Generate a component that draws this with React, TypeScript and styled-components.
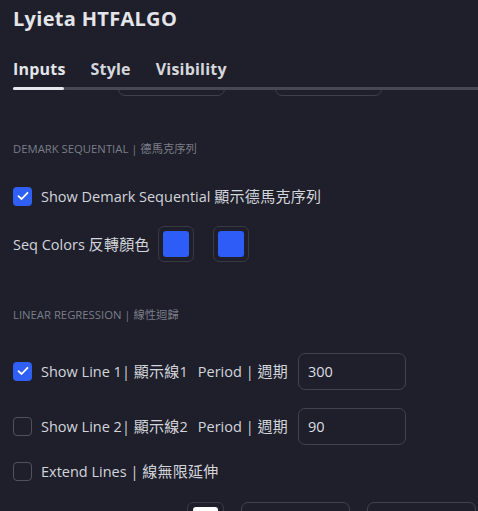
import React from "react";
import styled, { createGlobalStyle } from "styled-components";

const Global = createGlobalStyle`
  html, body { margin: 0; padding: 0; background: #1e1f2a; }
  body {
    font-family: "Open Sans", "Noto Sans CJK TC", sans-serif;
    color: #d1d4dc;
  }
`;

const Dialog = styled.div`
  width: 478px;
  height: 511px;
  overflow: hidden;
  background: #1e1f2a;
`;

const Title = styled.h1`
  margin: 0;
  padding: 6px 0 0 13px;
  font-size: 20px;
  font-weight: 700;
  line-height: 26px;
  color: #e4e5ea;
  letter-spacing: 0.3px;
`;

const Tabs = styled.div`
  display: flex;
  gap: 25px;
  padding-left: 13px;
  margin-top: 24px;
`;

const Tab = styled.div<{ $active?: boolean }>`
  font-size: 16px;
  font-weight: 700;
  line-height: 26px;
  letter-spacing: 0.2px;
  color: ${(p) => (p.$active ? "#e4e5ea" : "#d6d7dd")};
`;

const TabLine = styled.div`
  margin: 5px 0 0 13px;
  height: 3px;
  background: #464853;
  display: flex;
`;

const ActiveBar = styled.div`
  width: 51px;
  height: 3px;
  border-radius: 2px;
  background: #e6e7ec;
`;

const PeekRow = styled.div`
  height: 6px;
  overflow: hidden;
  display: flex;
  gap: 50px;
  padding-left: 118px;
`;

const PeekBox = styled.div`
  width: 107px;
  height: 36px;
  margin-top: -30px;
  box-sizing: border-box;
  border: 1px solid #3d3f4a;
  border-radius: 7px;
  flex-shrink: 0;
`;

const Content = styled.div`
  display: flex;
  flex-direction: column;
  padding-left: 13px;
`;

const SectionHeader = styled.div<{ $mt: number }>`
  margin-top: ${(p) => p.$mt}px;
  font-size: 11.3px;
  line-height: 20px;
  text-transform: uppercase;
  color: #7b7d88;
`;

const Row = styled.div<{ $mt: number }>`
  margin-top: ${(p) => p.$mt}px;
  height: 36px;
  display: flex;
  align-items: center;
  flex-shrink: 0;
`;

const Box = styled.span<{ $checked?: boolean }>`
  width: 19px;
  height: 19px;
  box-sizing: border-box;
  border-radius: 4px;
  flex-shrink: 0;
  display: flex;
  align-items: center;
  justify-content: center;
  background: ${(p) => (p.$checked ? "#2f5ff5" : "transparent")};
  border: ${(p) => (p.$checked ? "none" : "1px solid #4f525d")};
  margin-right: 9px;
`;

const Label = styled.span`
  font-size: 14.5px;
  line-height: 20px;
  color: #d3d5dc;
  white-space: nowrap;
`;

const Cjk = styled.span`
  font-size: 15px;
  letter-spacing: 0.3px;
`;

const InlineTitle = styled(Label)`
  margin-left: 10px;
`;

const Swatches = styled.div`
  display: flex;
  gap: 19px;
  margin-left: 8px;
`;

const Swatch = styled.div<{ $color: string }>`
  width: 36px;
  height: 36px;
  box-sizing: border-box;
  border: 1px solid #373945;
  border-radius: 6px;
  padding: 4px;
  display: flex;
  &::after {
    content: "";
    flex: 1;
    border-radius: 3px;
    background: ${(p) => p.$color};
  }
`;

const Input = styled.div`
  margin-left: 10px;
  width: 108px;
  height: 37px;
  box-sizing: border-box;
  border: 1px solid #40424d;
  border-radius: 7px;
  padding-left: 9px;
  display: flex;
  align-items: center;
  font-size: 14.5px;
  color: #dcdee4;
`;

const BottomRow = styled.div`
  margin-top: 13px;
  display: flex;
  gap: 17px;
  padding-left: 174px;
`;

const SmallSwatch = styled(Swatch)`
  width: 37px;
  height: 37px;
  padding: 4px 5px;
`;

const Select = styled.div`
  width: 109px;
  height: 36px;
  box-sizing: border-box;
  border: 1px solid #40424d;
  border-radius: 7px;
`;

const Check = () => (
  <svg width="12" height="10" viewBox="0 0 12 10" fill="none">
    <polyline
      points="1.5,5.2 4.6,8 10.5,1.8"
      stroke="#ffffff"
      strokeWidth="1.8"
      strokeLinecap="round"
      strokeLinejoin="round"
    />
  </svg>
);

const Checkbox = ({ checked }: { checked?: boolean }) => (
  <Box $checked={checked}>{checked && <Check />}</Box>
);

export default function App() {
  return (
    <>
      <Global />
      <Dialog>
        <Title>Lyieta HTFALGO</Title>
        <Tabs>
          <Tab $active>Inputs</Tab>
          <Tab>Style</Tab>
          <Tab>Visibility</Tab>
        </Tabs>
        <TabLine>
          <ActiveBar />
        </TabLine>
        <PeekRow>
          <PeekBox />
          <PeekBox />
        </PeekRow>
        <Content>
          <SectionHeader $mt={43}>DEMARK SEQUENTIAL | 德馬克序列</SectionHeader>
          <Row $mt={19}>
            <Checkbox checked />
            <Label>
              Show Demark Sequential <Cjk>顯示德馬克序列</Cjk>
            </Label>
          </Row>
          <Row $mt={12}>
            <Label>
              Seq Colors <Cjk>反轉顏色</Cjk>
            </Label>
            <Swatches>
              <Swatch $color="#2d5cf6" />
              <Swatch $color="#2d5cf6" />
            </Swatches>
          </Row>
          <SectionHeader $mt={43}>LINEAR REGRESSION | 線性迴歸</SectionHeader>
          <Row $mt={28}>
            <Checkbox checked />
            <Label>
              Show Line 1| <Cjk>顯示線</Cjk>1
            </Label>
            <InlineTitle>
              Period | <Cjk>週期</Cjk>
            </InlineTitle>
            <Input>300</Input>
          </Row>
          <Row $mt={19}>
            <Checkbox />
            <Label>
              Show Line 2| <Cjk>顯示線</Cjk>2
            </Label>
            <InlineTitle>
              Period | <Cjk>週期</Cjk>
            </InlineTitle>
            <Input>90</Input>
          </Row>
          <Row $mt={9}>
            <Checkbox />
            <Label>
              Extend Lines | <Cjk>線無限延伸</Cjk>
            </Label>
          </Row>
          <BottomRow>
            <SmallSwatch $color="#ffffff" />
            <Select />
            <Select />
          </BottomRow>
        </Content>
      </Dialog>
    </>
  );
}
